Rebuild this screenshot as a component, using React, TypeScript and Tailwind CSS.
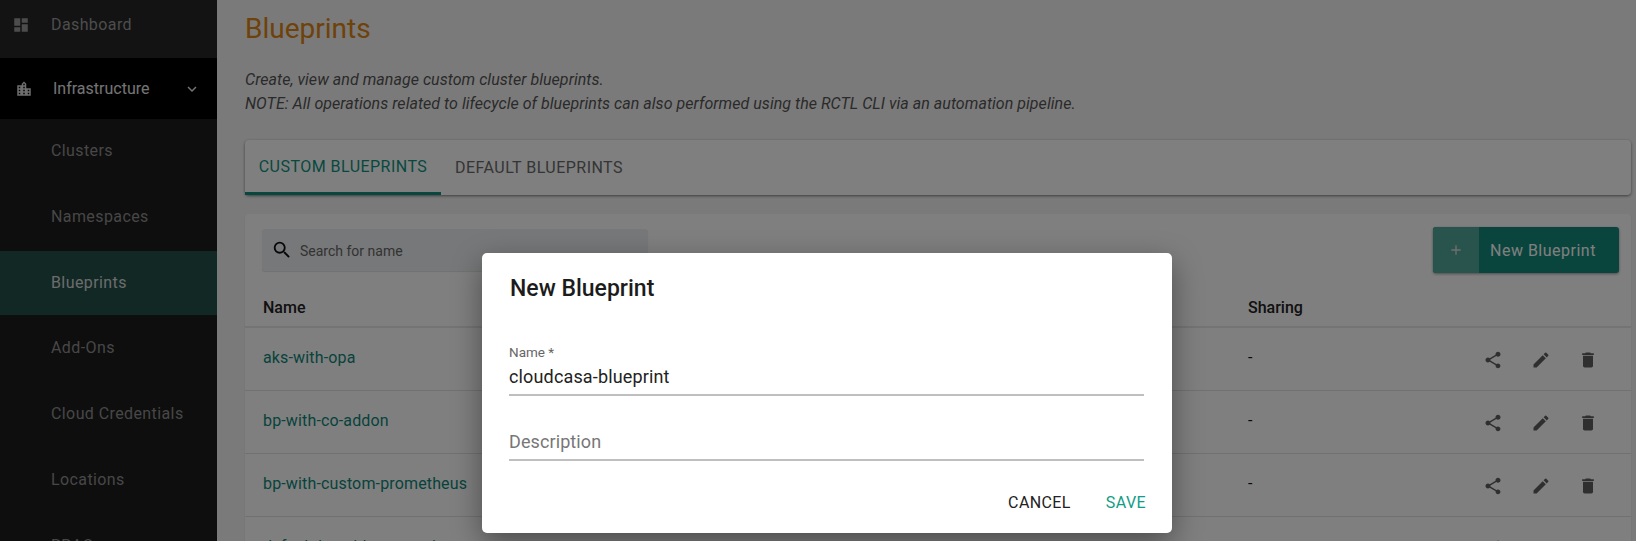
import { MdAdd, MdDashboard, MdDelete, MdEdit, MdExpandMore, MdLocationCity, MdSearch, MdShare } from "react-icons/md";

const subItems = [
  { label: "Clusters", cls: "h-[66px] pb-[3px] text-[#8e8e8e]" },
  { label: "Namespaces", cls: "h-[66px] pb-[3px] text-[#8e8e8e]" },
  { label: "Blueprints", cls: "h-[64px] pb-[1px] bg-[#22504a] text-[#d8d8d8]" },
  { label: "Add-Ons", cls: "h-[66px] text-[#8e8e8e]" },
  { label: "Cloud Credentials", cls: "h-[66px] text-[#8e8e8e]" },
  { label: "Locations", cls: "h-[66px] text-[#8e8e8e]" },
  { label: "RBAC", cls: "h-[66px] text-[#8e8e8e]" },
];
const rows = ["aks-with-opa", "bp-with-co-addon", "bp-with-custom-prometheus", "default-bp-with-annotations"];

const App = () => {
  return (
    <div className="relative flex h-[541px] w-[1636px] overflow-hidden bg-[#f5f5f5] font-['Roboto',sans-serif]">
      {/* sidebar */}
      <aside className="w-[217px] shrink-0 bg-[#1c1c1c]">
        <div className="flex h-[58px] items-center bg-[#262626] pb-[9px] pl-[12px] text-base tracking-[0.4px] text-[#9a9a9a]">
          <MdDashboard className="h-[18px] w-[18px] text-[#999]" />
          <span className="ml-[21px]">Dashboard</span>
        </div>
        <div className="flex h-[61px] items-center bg-black pl-[15px] pr-[16px] text-base text-[#e8e8e8]">
          <MdLocationCity className="h-[18px] w-[18px] text-[#ddd]" />
          <span className="ml-[20px] flex-1">Infrastructure</span>
          <MdExpandMore className="h-[18px] w-[18px]" />
        </div>
        {subItems.map((item) => (
          <div key={item.label} className={`flex items-center pl-[51px] text-base tracking-[0.4px] ${item.cls}`}>
            {item.label}
          </div>
        ))}
      </aside>

      {/* main */}
      <main className="min-w-0 flex-1 pl-[28px] pr-[5px]">
        <h1 className="pt-[11px] text-[28px] leading-[36px] text-[#dd8412]">Blueprints</h1>
        <div className="mt-[21px] text-base leading-[24px] tracking-[0.04px] text-[#555] italic">
          <p>Create, view and manage custom cluster blueprints.</p>
          <p>NOTE: All operations related to lifecycle of blueprints can also performed using the RCTL CLI via an automation pipeline.</p>
        </div>

        <div className="mt-[24px] flex h-[55px] rounded-[4px] bg-white shadow-[0_1px_3px_rgba(0,0,0,0.5)]">
          <div className="flex w-[196px] items-center justify-center border-b-[3px] border-[#118f7d] pt-[2px] text-base tracking-[0.47px] text-[#0f9280]">
            CUSTOM BLUEPRINTS
          </div>
          <div className="flex items-center pl-[14px] text-base tracking-[0.47px] text-[#6a6a6a]">
            DEFAULT BLUEPRINTS
          </div>
        </div>

        <section className="mt-[19px] rounded-[4px] bg-white shadow-[0_1px_2px_rgba(0,0,0,0.1)]">
          <div className="flex items-center justify-between pl-[17px] pr-[12px] pt-[13px]">
            <div className="flex h-[42px] w-[386px] items-center rounded-[3px] bg-[#eef0f2] pl-[9px] shadow-[0_1px_1px_rgba(0,0,0,0.12)]">
              <MdSearch className="h-[22px] w-[22px] text-[#111]" />
              <span className="ml-[7px] pt-[1px] text-sm text-[#666]">Search for name</span>
            </div>
            <button className="flex h-[46px] w-[186px] items-center rounded-[3px] bg-[#128a7b] pt-[1px] text-base tracking-[0.5px] text-white shadow-[0_1px_3px_rgba(0,0,0,0.4)]">
              <span className="-mt-[1px] flex h-[46px] w-[46px] items-center justify-center rounded-l-[3px] bg-[#52a99c]">
                <MdAdd className="h-[16px] w-[16px] text-[#ddd]" />
              </span>
              <span className="ml-[11px]">New Blueprint</span>
            </button>
          </div>

          <div className="mt-[20px] flex h-[35px] items-center border-b-2 border-[#e8e8e8] pb-[3px] text-base font-medium text-[#222]">
            <span className="w-[1003px] pl-[18px]">Name</span>
            <span>Sharing</span>
          </div>

          {rows.map((name) => (
            <div key={name} className="flex h-[63px] items-center border-b border-[#e2e2e2] pb-[2px] text-base tracking-[0.15px]">
              <span className="w-[1003px] pl-[18px] text-[#0f8678]">{name}</span>
              <span className="flex-1 text-[#111]">-</span>
              <div className="flex w-[160px] items-center gap-[27.5px] pl-[12px] pt-[4px] text-[#5f5f5f]">
                <MdShare className="h-[20px] w-[20px]" />
                <MdEdit className="h-[20px] w-[20px]" />
                <MdDelete className="h-[20px] w-[20px]" />
              </div>
            </div>
          ))}
        </section>
      </main>

      {/* dialog over a dimmed page */}
      <div className="absolute inset-0 bg-black/50">
        <div className="ml-[482px] mt-[253px] h-[280px] w-[690px] rounded-[5px] bg-white pl-[27px] pr-[28px] shadow-[0_10px_30px_rgba(0,0,0,0.4)]">
          <h2 className="pl-[1px] pt-[21px] text-[23px] leading-[30px] font-medium text-[#1c1c1c]">New Blueprint</h2>
          <div className="mt-[40px] border-b-2 border-[#bfbfbf] pb-[5px]">
            <div className="text-[13.5px] leading-[16px] text-[#666]">Name *</div>
            <div className="mt-[5px] text-lg leading-[24px] tracking-[0.15px] text-[#222]">cloudcasa-blueprint</div>
          </div>
          <div className="mt-[34px] border-b-2 border-[#bfbfbf] pb-[5px] text-lg leading-[24px] tracking-[0.1px] text-[#777]">Description</div>
          <div className="-mr-[2px] mt-[32px] flex justify-end gap-[35px] text-base leading-[20px] tracking-[0.4px]">
            <button className="text-[#222]">CANCEL</button>
            <button className="text-[#0f9d88]">SAVE</button>
          </div>
        </div>
      </div>
    </div>
  );
};

export default App;
